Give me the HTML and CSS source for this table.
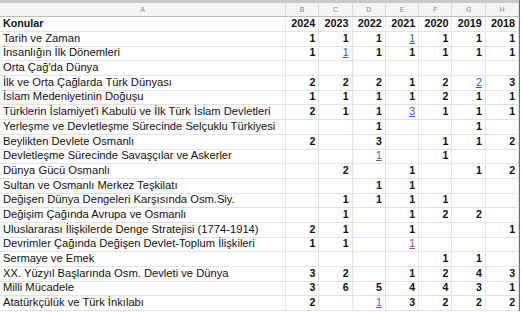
FILE: index.html
```html
<!DOCTYPE html>
<html lang="tr">
<head>
<meta charset="utf-8">
<title>Konular</title>
<link rel="stylesheet" href="styles.css">
</head>
<body>
<div class="sheet" id="sheet"></div>
<script src="app.js"></script>
</body>
</html>
```

FILE: styles.css
```css
* { box-sizing: border-box; }
html, body { margin: 0; padding: 0; background: #fff; }
body { font-family: "Liberation Sans", Arial, sans-serif; color: #111; }

.sheet {
  display: grid;
  width: 520px;
  grid-template-columns: 286px repeat(7, 33.3px);
  grid-template-rows: 3px 14px 15px repeat(19, 14.7px);
  border-right: 1px solid #6d6d6d;
}

.bar {
  grid-column: 1 / -1;
  background: #c9c9c9;
}

.colhead {
  background: #f4f4f4;
  border-right: 1px solid #dcdcdc;
  border-bottom: 1px solid #bdbdbd;
  color: #8a8a8a;
  font-size: 7px;
  display: flex;
  align-items: center;
  justify-content: center;
}

.c {
  border-right: 1px solid #e3e3e3;
  border-bottom: 1px solid #e3e3e3;
  font-size: 10.6px;
  white-space: nowrap;
  display: flex;
  align-items: flex-end;
  padding: 0 3px 2px 3px;
  line-height: 12px;
}

.c.label { overflow: visible; position: relative; z-index: 1; font-size: 11.2px; }
.c.num { justify-content: flex-end; font-weight: bold; }
.c.label.head { font-weight: bold; font-size: 10.7px; }
.c.num.head { font-size: 10.8px; }

.lnk { color: #1a5fc9; text-decoration: underline; font-weight: normal; }
.vis { color: #8d4e86; text-decoration: underline; font-weight: normal; }
```

FILE: app.js
```js
const rows = [
  ["Tarih ve Zaman", [1,1,1,"L1",1,1,1]],
  ["İnsanlığın İlk Dönemleri", [1,"L1",1,1,1,1,1]],
  ["Orta Çağ'da Dünya", ["","","","","","",""]],
  ["İlk ve Orta Çağlarda Türk Dünyası", [2,2,2,1,2,"L2",3]],
  ["İslam Medeniyetinin Doğuşu", [1,1,1,1,2,1,1]],
  ["Türklerin İslamiyet'i Kabulü ve İlk Türk İslam Devletleri", [2,1,1,"L3",1,1,1]],
  ["Yerleşme ve Devletleşme Sürecinde Selçuklu Türkiyesi", ["","",1,"","",1,""]],
  ["Beylikten Devlete Osmanlı", [2,"",3,"",1,1,2]],
  ["Devletleşme Sürecinde Savaşçılar ve Askerler", ["","","V1","",1,"",""]],
  ["Dünya Gücü Osmanlı", ["",2,"",1,"",1,2]],
  ["Sultan ve Osmanlı Merkez Teşkilatı", ["","",1,1,"","",""]],
  ["Değişen Dünya Dengeleri Karşısında Osm.Siy.", ["",1,1,1,1,"",""]],
  ["Değişim Çağında Avrupa ve Osmanlı", ["",1,"",1,2,2,""]],
  ["Uluslararası İlişkilerde Denge Stratejisi (1774-1914)", [2,1,"",1,"","",1]],
  ["Devrimler Çağında Değişen Devlet-Toplum İlişkileri", [1,1,"","V1","","",""]],
  ["Sermaye ve Emek", ["","","","",1,1,""]],
  ["XX. Yüzyıl Başlarında Osm. Devleti ve Dünya", [3,2,"",1,2,4,3]],
  ["Milli Mücadele", [3,6,5,4,4,3,1]],
  ["Atatürkçülük ve Türk İnkılabı", [2,"","V1",3,2,2,2]]
];
const years = [2024,2023,2022,2021,2020,2019,2018];
const sheet = document.getElementById("sheet");
function el(cls, html) {
  const d = document.createElement("div");
  d.className = cls;
  d.innerHTML = html;
  sheet.appendChild(d);
}
el("bar", "");
["A","B","C","D","E","F","G","H"].forEach(l => el("colhead", l));
el("c label head", "Konular");
years.forEach(y => el("c num head", String(y)));
rows.forEach(([label, vals]) => {
  el("c label", label);
  vals.forEach(v => {
    let html = String(v);
    if (typeof v === "string" && v[0] === "L") html = '<span class="lnk">' + v.slice(1) + "</span>";
    if (typeof v === "string" && v[0] === "V") html = '<span class="vis">' + v.slice(1) + "</span>";
    el("c num", html);
  });
});
```
